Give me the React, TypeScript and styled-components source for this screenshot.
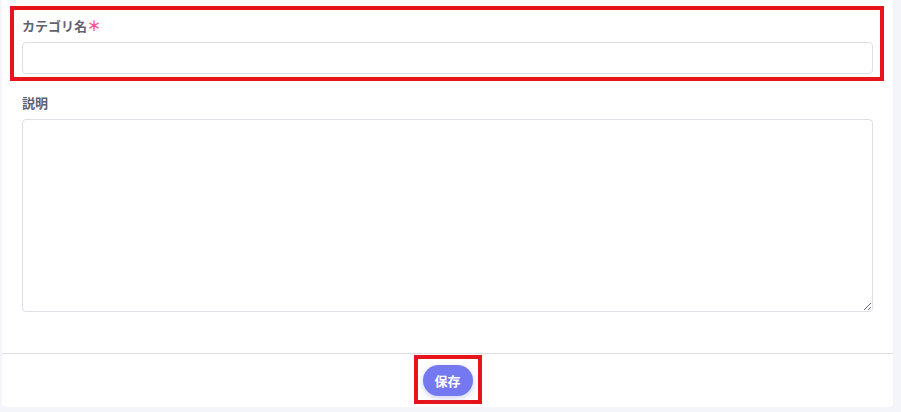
import { Fragment } from "react";
import styled, { createGlobalStyle } from "styled-components";

const GlobalStyle = createGlobalStyle`
	html, body {
		margin: 0;
		padding: 0;
		background: #f4f5fa;
		font-family: "Noto Sans CJK JP", "Noto Sans", sans-serif;
	}
`;

const Page = styled.div`
	width: 901px;
	height: 412px;
	overflow: hidden;
	padding: 0 8px 6px 2px;
	box-sizing: border-box;
`;

const Card = styled.div`
	background: #fff;
	border-radius: 0 0 4px 4px;
	padding-top: 6px;
`;

const Form = styled.div`
	padding: 0 20px;
`;

const FormItem = styled.div<{ $highlight?: boolean }>`
	display: flex;
	flex-direction: column;
	${(p) => p.$highlight
		? `
		border: 4px solid #e8141c;
		margin: 0 -11px 12px -12px;
		padding: 6px 7px 3px 8px;
	`
		: ""}
`;

const Label = styled.label`
	display: block;
	height: 20px;
	font-size: 13px;
	font-weight: bold;
	line-height: 20px;
	color: #5f6270;
	margin-bottom: 6px;
`;

const Required = styled.span`
	color: #ff4f8b;
	font-weight: bold;
	font-size: 14px;
	line-height: 0;
`;

const Input = styled.input`
	height: 32px;
	box-sizing: border-box;
	border: 1px solid #dcdfe6;
	border-radius: 4px;
	padding: 0 10px;
	font-size: 13px;
	outline: none;
`;

const TextArea = styled.textarea`
	height: 193px;
	box-sizing: border-box;
	border: 1px solid #dcdfe6;
	border-radius: 4px;
	padding: 6px 10px;
	font-size: 13px;
	font-family: inherit;
	outline: none;
	resize: vertical;
`;

const Footer = styled.div`
	margin-top: 41px;
	border-top: 1px solid #dcdfe6;
	padding: 1px 0 3px;
	display: flex;
	justify-content: center;
`;

const ButtonFrame = styled.div`
	border: 4px solid #e8141c;
	padding: 6px 5px 4px;
`;

const SaveButton = styled.button`
	width: 50px;
	height: 31px;
	border: none;
	border-radius: 16px;
	background: #7479f2;
	color: #fff;
	font-family: inherit;
	font-size: 13px;
	font-weight: bold;
	box-shadow: 0 2px 6px rgba(116, 121, 242, 0.35);
	cursor: pointer;
`;

export default function App(): JSX.Element {
	return (
		<Fragment>
			<GlobalStyle />
			<Page>
				<Card>
					<Form>
						<FormItem $highlight>
							<Label>カテゴリ名<Required>＊</Required></Label>
							<Input type="text" />
						</FormItem>
						<FormItem>
							<Label>説明</Label>
							<TextArea />
						</FormItem>
					</Form>
					<Footer>
						<ButtonFrame>
							<SaveButton>保存</SaveButton>
						</ButtonFrame>
					</Footer>
				</Card>
			</Page>
		</Fragment>
	);
}
